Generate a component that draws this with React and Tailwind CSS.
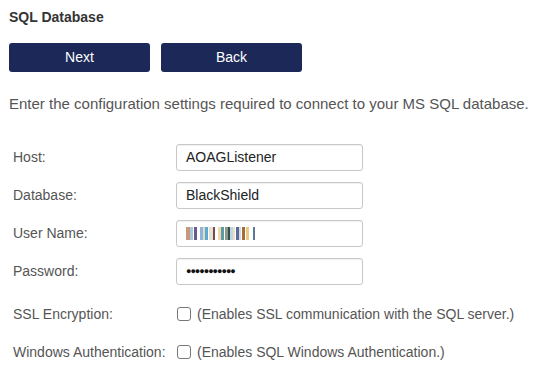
import React from "react";

const bars = [
  ["#c9977e", 4], ["#a9c7d9", 3], ["#fff", 1], ["#6a5a8c", 3], ["#fff", 3], ["#8fb3d9", 3], ["#e9d9b9", 2], ["#5aaad9", 3], ["#fff", 1],
  ["#e2e2d9", 4], ["#7a4a4a", 2], ["#fff", 3], ["#f2d9a9", 3], ["#5a9aa9", 3], ["#fff", 1], ["#8a9a8a", 3], ["#3a4a4a", 2], ["#b9d9e9", 3],
  ["#f2e2b9", 2], ["#fff", 1], ["#5a6a9a", 3], ["#d9d9e2", 2], ["#fff", 1], ["#a96a3a", 3], ["#fff", 1], ["#e9c98a", 3], ["#fff", 4], ["#5a7a9a", 2],
];

function Field({ label, children }) {
  return (
    <div className="flex items-center h-[27px]">
      <div className="w-[167px] pl-[4px] text-[14px] text-[#555]">{label}</div>
      <div className="w-[187px] h-[27px] border border-[#c8c8c8] rounded-[3px] bg-white flex items-center pl-[9px] text-[14px] text-[#222] shadow-[inset_0_1px_1px_rgba(0,0,0,0.06)]">
        {children}
      </div>
    </div>
  );
}

function Check({ label, text }) {
  return (
    <div className="flex items-center h-[16px]">
      <div className="w-[168px] pl-[4px] text-[14px] text-[#555] whitespace-nowrap">{label}</div>
      <div className="w-[14px] h-[14px] border border-[#777] rounded-[3px] bg-white shrink-0" />
      <div className="ml-[6px] text-[14px] text-[#555] whitespace-nowrap">{text}</div>
    </div>
  );
}

export default function App() {
  return (
    <div className="w-[547px] h-[379px] bg-white overflow-hidden pl-[9px] pt-[10px]" style={{ fontFamily: '"Liberation Sans", Arial, sans-serif' }}>
      <div className="text-[14px] font-bold text-[#333] leading-[14px]">SQL Database</div>
      <div className="flex gap-[11px] mt-[19px]">
        <button className="w-[141px] h-[29px] rounded-[3px] bg-[#1c2857] text-white text-[14px]">Next</button>
        <button className="w-[141px] h-[29px] rounded-[3px] bg-[#1c2857] text-white text-[14px]">Back</button>
      </div>
      <div className="mt-[24px] text-[15px] text-[#555] leading-[16px] whitespace-nowrap">
        Enter the configuration settings required to connect to your MS SQL database.
      </div>
      <div className="mt-[32px] flex flex-col gap-[11px]">
        <Field label="Host:">AOAGListener</Field>
        <Field label="Database:">BlackShield</Field>
        <Field label="User Name:">
          <div className="flex h-[13px]">
            {bars.map(([c, w], i) => (
              <div key={i} className="h-full" style={{ backgroundColor: c, width: w }} />
            ))}
          </div>
        </Field>
        <Field label="Password:">
          <span className="text-[9px] tracking-[-1px] text-[#111]">●●●●●●●●●●●</span>
        </Field>
      </div>
      <div className="mt-[21px] flex flex-col gap-[22px]">
        <Check label="SSL Encryption:" text="(Enables SSL communication with the SQL server.)" />
        <Check label="Windows Authentication:" text="(Enables SQL Windows Authentication.)" />
      </div>
    </div>
  );
}
